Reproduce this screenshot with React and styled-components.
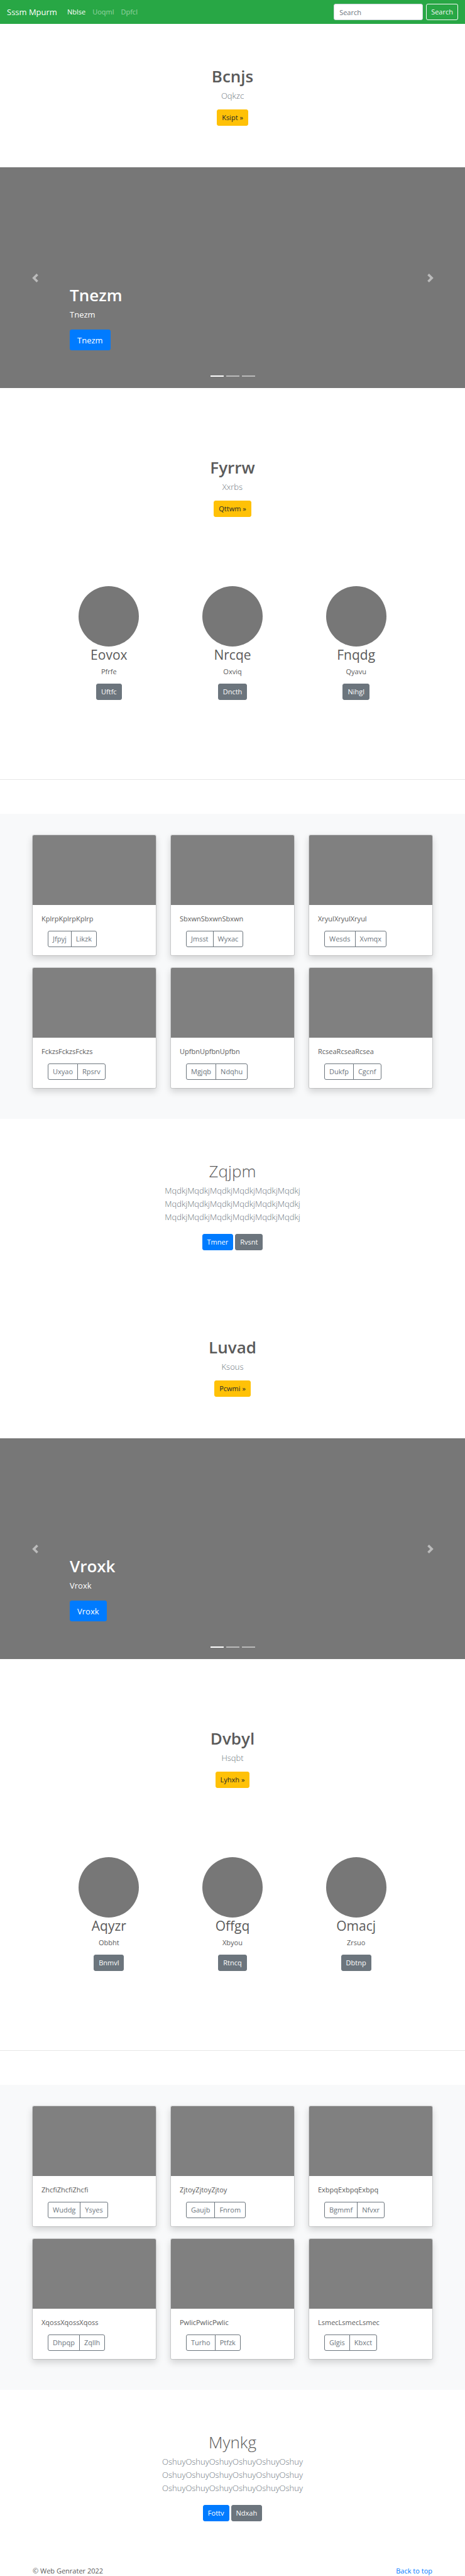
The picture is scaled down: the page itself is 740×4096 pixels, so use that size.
import React from "react";
import styled, { createGlobalStyle, css } from "styled-components";

const GlobalStyle = createGlobalStyle`
  *, *::before, *::after { box-sizing: border-box; }
  body {
    margin: 0;
    background: #fff;
    color: #5a5a5a;
    font-family: "Segoe UI", "Open Sans", "Noto Sans", sans-serif;
    font-size: 11px;
    line-height: 16px;
  }
  h1, h2, p { margin: 0; }
  button, input { font: inherit; }
`;

const tones = {
  warning: { bg: "#ffc107", border: "#ffc107", fg: "#212529" },
  primary: { bg: "#007bff", border: "#007bff", fg: "#fff" },
  secondary: { bg: "#6c757d", border: "#6c757d", fg: "#fff" },
  outline: { bg: "transparent", border: "#6c757d", fg: "#6c757d" },
  outlineLight: { bg: "transparent", border: "#f8f9fa", fg: "#f8f9fa" },
};

const Button = styled.button`
  height: 26px;
  padding: 0 7px;
  border: 1px solid ${(p) => tones[p.$tone].border};
  border-radius: 3px;
  background: ${(p) => tones[p.$tone].bg};
  color: ${(p) => tones[p.$tone].fg};
  line-height: 16px;
  white-space: nowrap;
  cursor: pointer;
  ${(p) =>
    p.$large &&
    css`
      height: 33px;
      padding: 0 11px;
      font-size: 13px;
      line-height: 20px;
    `}
`;

const Navbar = styled.nav`
  display: flex;
  align-items: center;
  height: 38px;
  padding: 0 11px;
  background: #28a745;
`;

const Brand = styled.a`
  margin-right: 16px;
  color: #fff;
  font-size: 13px;
  line-height: 20px;
  text-decoration: none;
`;

const NavLinks = styled.div`
  display: flex;
  gap: 11px;
  margin-right: auto;
`;

const NavLink = styled.a`
  color: ${(p) => (p.$active ? "#fff" : "rgba(255, 255, 255, 0.5)")};
  text-decoration: none;
`;

const SearchForm = styled.form`
  display: flex;
  gap: 5px;
`;

const SearchInput = styled.input`
  width: 142px;
  height: 26px;
  padding: 0 8px;
  border: 1px solid #ced4da;
  border-radius: 3px;
  background: #fff;
  color: #495057;
  &::placeholder { color: #6c757d; opacity: 1; }
`;

const Title = styled.h1`
  margin-bottom: 3px;
  font-size: 26px;
  font-weight: ${(p) => (p.$light ? 300 : 600)};
  line-height: 35px;
`;

const Lead = styled.p`
  margin-bottom: ${(p) => (p.$spacious ? 16 : 11)}px;
  color: #6c757d;
  font-size: 13px;
  font-weight: 300;
  line-height: 21px;
`;

const HeroSection = styled.section`
  padding: ${(p) => (p.$tall ? 109 : 66)}px 11px ${(p) => (p.$tall ? 110 : 66)}px;
  text-align: center;
`;

const CarouselFrame = styled.section`
  position: relative;
  display: flex;
  flex-direction: column;
  justify-content: flex-end;
  align-items: flex-start;
  min-height: 351px;
  padding: 0 15% 60px;
  background: #777;
  color: #fff;
`;

const CaptionText = styled.p`
  margin-bottom: 14px;
  font-size: 13px;
  line-height: 20px;
`;

const CarouselControl = styled.button`
  position: absolute;
  top: 0;
  bottom: 0;
  ${(p) => p.$side}: 0;
  display: flex;
  align-items: center;
  justify-content: center;
  width: 15%;
  padding: 0;
  border: 0;
  background: none;
  color: #fff;
  opacity: 0.5;
  cursor: pointer;
`;

const Indicators = styled.div`
  position: absolute;
  right: 0;
  bottom: 18px;
  left: 0;
  display: flex;
  justify-content: center;
  gap: 4px;
`;

const Indicator = styled.button`
  width: 21px;
  height: 2px;
  padding: 0;
  border: 0;
  background: #fff;
  opacity: ${(p) => (p.$active ? 1 : 0.5)};
  cursor: pointer;
`;

const Features = styled.section`
  display: grid;
  grid-template-columns: repeat(3, 1fr);
  padding: 0 75px 126px;
`;

const Feature = styled.article`
  display: flex;
  flex-direction: column;
  align-items: center;
`;

const Circle = styled.div`
  width: 96px;
  height: 96px;
  border-radius: 50%;
  background: #777;
`;

const FeatureTitle = styled.h2`
  margin-bottom: 5px;
  font-size: 21px;
  font-weight: 400;
  line-height: 27px;
`;

const FeatureText = styled.p`
  margin-bottom: 11px;
`;

const Divider = styled.hr`
  height: 1px;
  margin: 0 0 54px;
  border: 0;
  background: #e6e6e6;
`;

const Album = styled.section`
  display: grid;
  grid-template-columns: repeat(3, 1fr);
  gap: 18px 22px;
  padding: 33px 51px 48px;
  background: #f8f9fa;
`;

const Card = styled.article`
  overflow: hidden;
  border: 1px solid rgba(0, 0, 0, 0.125);
  border-radius: 3px;
  background: #fff;
  background-clip: padding-box;
  box-shadow: 0 5px 11px rgba(0, 0, 0, 0.15);
`;

const CardImage = styled.div`
  height: 111px;
  background: #808080;
`;

const CardBody = styled.div`
  padding: 14px 14px 13px;
`;

const CardText = styled.p`
  margin-bottom: 11px;
`;

const ButtonGroup = styled.div`
  display: flex;
  margin-left: 10px;

  & > button:first-child { border-radius: 3px 0 0 3px; }
  & > button:last-child { margin-left: -1px; border-radius: 0 3px 3px 0; }
`;

const CallToAction = styled.section`
  padding: 66px 11px 71px;
  text-align: center;
`;

const Actions = styled.div`
  display: flex;
  justify-content: center;
  gap: 3px;
`;

const Footer = styled.footer`
  display: flex;
  justify-content: space-between;
  padding: 0 52px;
`;

const FooterLink = styled.a`
  color: #007bff;
  text-decoration: none;
`;

const Chevron = ({ d }) => (
  <svg width="14" height="14" viewBox="0 0 8 8" fill="currentColor" aria-hidden="true">
    <path d={d} />
  </svg>
);

const Hero = ({ title, lead, action, tall }) => (
  <HeroSection $tall={tall}>
    <Title>{title}</Title>
    <Lead>{lead}</Lead>
    <Button $tone="warning">{action} »</Button>
  </HeroSection>
);

const Carousel = ({ label }) => (
  <CarouselFrame>
    <Title>{label}</Title>
    <CaptionText>{label}</CaptionText>
    <Button $tone="primary" $large>{label}</Button>
    <CarouselControl $side="left" aria-label="Previous">
      <Chevron d="M5.25 0l-4 4 4 4 1.5-1.5L4.25 4l2.5-2.5L5.25 0z" />
    </CarouselControl>
    <CarouselControl $side="right" aria-label="Next">
      <Chevron d="M2.75 0l-1.5 1.5L3.75 4l-2.5 2.5L2.75 8l4-4-4-4z" />
    </CarouselControl>
    <Indicators>
      {[1, 2, 3].map((n) => (
        <Indicator key={n} $active={n === 1} aria-label={`Slide ${n}`} />
      ))}
    </Indicators>
  </CarouselFrame>
);

const groups = [
  {
    intro: ["Bcnjs", "Oqkzc", "Ksipt"],
    slide: "Tnezm",
    second: ["Fyrrw", "Xxrbs", "Qttwm"],
    features: [
      ["Eovox", "Pfrfe", "Uftfc"],
      ["Nrcqe", "Oxviq", "Dncth"],
      ["Fnqdg", "Qyavu", "Nihgl"],
    ],
    cards: [
      ["KplrpKplrpKplrp", "Jfpyj", "Likzk"],
      ["SbxwnSbxwnSbxwn", "Jmsst", "Wyxac"],
      ["XryulXryulXryul", "Wesds", "Xvmqx"],
      ["FckzsFckzsFckzs", "Uxyao", "Rpsrv"],
      ["UpfbnUpfbnUpfbn", "Mgjqb", "Ndqhu"],
      ["RcseaRcseaRcsea", "Dukfp", "Cgcnf"],
    ],
    cta: ["Zqjpm", "MqdkjMqdkjMqdkjMqdkjMqdkjMqdkj", "Tmner", "Rvsnt"],
  },
  {
    intro: ["Luvad", "Ksous", "Pcwmi"],
    slide: "Vroxk",
    second: ["Dvbyl", "Hsqbt", "Lyhxh"],
    features: [
      ["Aqyzr", "Obbht", "Bnmvl"],
      ["Offgq", "Xbyou", "Rtncq"],
      ["Omacj", "Zrsuo", "Dbtnp"],
    ],
    cards: [
      ["ZhcfiZhcfiZhcfi", "Wuddg", "Ysyes"],
      ["ZjtoyZjtoyZjtoy", "Gaujb", "Fnrom"],
      ["ExbpqExbpqExbpq", "Bgmmf", "Nfvxr"],
      ["XqossXqossXqoss", "Dhpqp", "Zqllh"],
      ["PwlicPwlicPwlic", "Turho", "Ptfzk"],
      ["LsmecLsmecLsmec", "Glgis", "Kbxct"],
    ],
    cta: ["Mynkg", "OshuyOshuyOshuyOshuyOshuyOshuy", "Fottv", "Ndxah"],
  },
];

const Group = ({ intro, slide, second, features, cards, cta }) => (
  <>
    <Hero title={intro[0]} lead={intro[1]} action={intro[2]} />
    <Carousel label={slide} />
    <Hero title={second[0]} lead={second[1]} action={second[2]} tall />
    <Features>
      {features.map(([title, text, action]) => (
        <Feature key={title}>
          <Circle />
          <FeatureTitle>{title}</FeatureTitle>
          <FeatureText>{text}</FeatureText>
          <Button $tone="secondary">{action}</Button>
        </Feature>
      ))}
    </Features>
    <Divider />
    <Album>
      {cards.map(([text, first, last]) => (
        <Card key={text}>
          <CardImage />
          <CardBody>
            <CardText>{text}</CardText>
            <ButtonGroup>
              <Button $tone="outline">{first}</Button>
              <Button $tone="outline">{last}</Button>
            </ButtonGroup>
          </CardBody>
        </Card>
      ))}
    </Album>
    <CallToAction>
      <Title $light>{cta[0]}</Title>
      <Lead $spacious>
        {cta[1]}
        <br />
        {cta[1]}
        <br />
        {cta[1]}
      </Lead>
      <Actions>
        <Button $tone="primary">{cta[2]}</Button>
        <Button $tone="secondary">{cta[3]}</Button>
      </Actions>
    </CallToAction>
  </>
);

export default function App() {
  return (
    <>
      <GlobalStyle />
      <Navbar>
        <Brand href="#">Sssm Mpurm</Brand>
        <NavLinks>
          <NavLink href="#" $active>Nblse</NavLink>
          <NavLink href="#">Uoqml</NavLink>
          <NavLink href="#">Dpfcl</NavLink>
        </NavLinks>
        <SearchForm onSubmit={(e) => e.preventDefault()}>
          <SearchInput type="search" placeholder="Search" aria-label="Search" />
          <Button $tone="outlineLight" type="submit">Search</Button>
        </SearchForm>
      </Navbar>
      <main>
        {groups.map((group) => (
          <Group key={group.slide} {...group} />
        ))}
      </main>
      <Footer>
        <p>© Web Genrater 2022</p>
        <FooterLink href="#">Back to top</FooterLink>
      </Footer>
    </>
  );
}
